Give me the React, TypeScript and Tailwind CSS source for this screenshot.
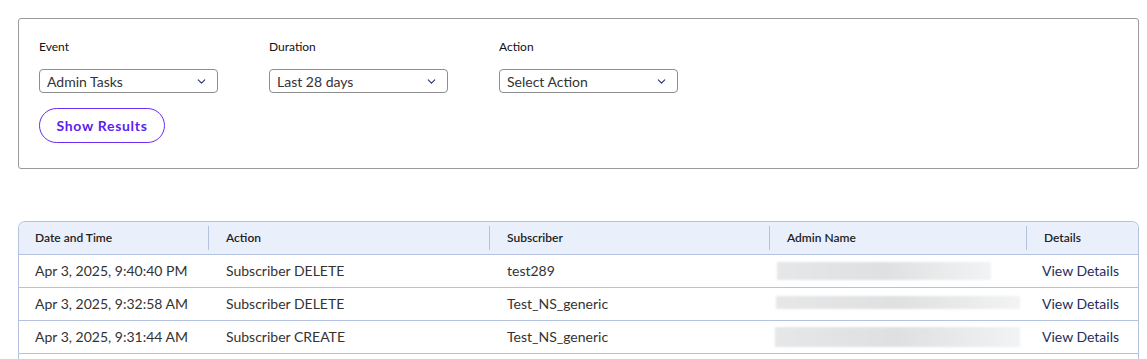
import { ChevronDown } from 'lucide-react';

const filters = [
  { label: 'Event', value: 'Admin Tasks' },
  { label: 'Duration', value: 'Last 28 days' },
  { label: 'Action', value: 'Select Action' },
];

const rows = [
  { date: 'Apr 3, 2025, 9:40:40 PM', action: 'Subscriber DELETE', subscriber: 'test289', blur: 'w-[214px] h-[18px] ml-[8px]' },
  { date: 'Apr 3, 2025, 9:32:58 AM', action: 'Subscriber DELETE', subscriber: 'Test_NS_generic', blur: 'w-[244px] h-[13px] ml-[7px] -mt-[3px]' },
  { date: 'Apr 3, 2025, 9:31:44 AM', action: 'Subscriber CREATE', subscriber: 'Test_NS_generic', blur: 'w-[245px] h-[20px] ml-[6px]' },
];

function Blurred({ className }: { className: string }) {
  return (
    <div
      className={`${className} bg-gradient-to-r from-[#e6e7e8] via-[#dfe0e1] to-[#f2f3f4] blur-[1px]`}
    />
  );
}

export default function App() {
  return (
    <div className="min-h-[359px] bg-white px-[18px] pt-[18px] font-['Lato',sans-serif] text-[#333]">
      <div className="h-[151px] w-[1121px] rounded-[3px] border border-[#9a9a9a] px-5 pt-[20px]">
        <div className="flex gap-[51px]">
          {filters.map((f) => (
            <div key={f.label} className="w-[179px]">
              <p className="text-[12px] leading-[16px] text-[#111]">{f.label}</p>
              <div className="mt-[14px] flex h-[24px] items-center justify-between rounded-[4px] border border-[#8e8e8e] pl-[7px] pr-[9px] text-[14px] text-[#333]">
                <span>{f.value}</span>
                <ChevronDown size={13} strokeWidth={2} className="text-[#25357a]" />
              </div>
            </div>
          ))}
        </div>
        <button className="mt-[15px] h-[35px] w-[126px] rounded-full border border-[#6a2cf0] text-[14px] font-bold tracking-[0.7px] text-[#5b1ff0]">
          Show Results
        </button>
      </div>

      <div className="mt-[52px] w-[1121px] overflow-hidden rounded-t-[7px] border-x border-t border-[#b4c2e0]">
        <div className="grid h-[33px] grid-cols-[189px_281px_280px_257px_1fr] items-center border-b border-[#b4c2e0] bg-[#eaf0fb] text-[12px] font-semibold text-[#222]">
          {['Date and Time', 'Action', 'Subscriber', 'Admin Name', 'Details'].map((h, i) => (
            <div
              key={h}
              className={`flex h-[24px] items-center ${i > 0 ? 'border-l border-[#b4c2e0] pl-[17px]' : 'pl-[16px]'}`}
            >
              {h}
            </div>
          ))}
        </div>
        {rows.map((r) => (
          <div
            key={r.date}
            className="grid h-[33px] grid-cols-[189px_281px_280px_257px_1fr] items-center border-b border-[#b4c2e0] pb-[1px] text-[14px] text-[#333]"
          >
            <div className="pl-[16px]">{r.date}</div>
            <div className="pl-[18px]">{r.action}</div>
            <div className="pl-[18px]">{r.subscriber}</div>
            <div>
              <Blurred className={r.blur} />
            </div>
            <div className="pl-[16px] text-[#1f2d5c]">View Details</div>
          </div>
        ))}
        <div className="h-[10px]" />
      </div>
    </div>
  );
}
